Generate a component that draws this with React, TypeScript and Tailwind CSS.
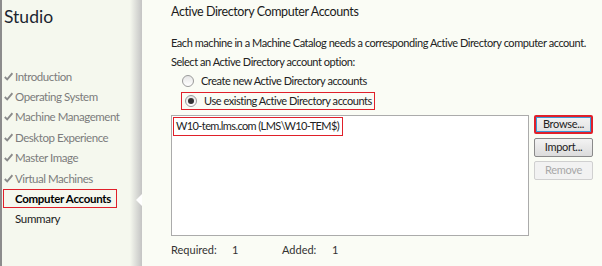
import React from "react";

const font = { fontFamily: 'Lato, "Noto Sans", sans-serif' };

const steps = [
  "Introduction",
  "Operating System",
  "Machine Management",
  "Desktop Experience",
  "Master Image",
  "Virtual Machines",
];

const Check = () => (
  <svg width="9" height="9" viewBox="0 0 9 9" className="shrink-0">
    <path d="M0.8 5 L3.2 7.4 L8.4 1.2" stroke="#8a8a8a" strokeWidth="1.8" fill="none" />
  </svg>
);

const Radio = ({ checked }: { checked?: boolean }) => (
  <span className="w-[12px] h-[12px] rounded-full border border-[#9a9a9a] bg-gradient-to-b from-[#e6e6e6] to-[#ffffff] flex items-center justify-center shrink-0">
    {checked && <span className="w-[6px] h-[6px] rounded-full bg-[#333]" />}
  </span>
);

const Sidebar = () => (
  <div className="relative w-[142px] shrink-0 flex border-l-[2px] border-[#8c8c8c] bg-[#f5f8ee] whitespace-nowrap">
    <div className="flex-1 flex flex-col">
      <div className="text-[17.5px] leading-none text-[#1b2530] pl-[2px] pt-[8px] h-[66px]">Studio</div>
      {steps.map((s) => (
        <div key={s} className="h-[20.4px] flex items-center gap-[2px] pl-[2px] text-[11.5px] tracking-[-0.45px] text-[#7c7c7c]">
          <Check />
          <span>{s}</span>
        </div>
      ))}
      <div className="h-[20.4px] flex items-center">
        <div className="ml-[1px] w-[114px] h-[19px] border-[1.5px] border-[#e0202a] flex items-center pl-[11px] text-[11.5px] tracking-[-0.3px] font-bold text-black">
          Computer Accounts
        </div>
      </div>
      <div className="h-[20.4px] flex items-center pl-[13px] text-[11.5px] tracking-[-0.3px] text-[#222]">Summary</div>
    </div>
    <div className="w-[12px] bg-gradient-to-r from-[#f5f8ee] to-[#c4c4c4]" />
    <div className="absolute right-0 top-[194px] w-0 h-0 border-y-[6px] border-y-transparent border-r-[6px] border-r-white" />
  </div>
);

const Button = ({ label, disabled, focused }: { label: string; disabled?: boolean; focused?: boolean }) => (
  <div
    className={
      "w-[59px] h-[19px] rounded-[2px] flex items-center justify-center text-[11px] tracking-[-0.3px] " +
      (focused
        ? "border-[2px] border-[#e0202a] bg-gradient-to-b from-[#f3f3f3] to-[#e2e2e2] text-[#222] shadow-[inset_0_0_0_1px_#3c9ad8]"
        : disabled
        ? "border border-[#d0d0d0] bg-[#f2f2f2] text-[#a8a8a8]"
        : "border border-[#8a8a8a] bg-gradient-to-b from-[#f3f3f3] to-[#dcdcdc] text-[#222]")
    }
  >
    {label}
  </div>
);

export default function App() {
  return (
    <div style={font} className="w-[602px] h-[266px] flex bg-[#fafcf5] overflow-hidden">
      <Sidebar />
      <div className="flex-1 pl-[29px] pt-[3px] text-[11px] tracking-[-0.45px] text-[#222] whitespace-nowrap">
        <div className="text-[12.5px] tracking-[-0.4px] text-[#1b1b1b] h-[18px] leading-[18px]">Active Directory Computer Accounts</div>
        <div className="mt-[12px] h-[19px] leading-[19px]">
          Each machine in a Machine Catalog needs a corresponding Active Directory computer account.
        </div>
        <div className="h-[19px] leading-[19px]">Select an Active Directory account option:</div>
        <div className="h-[20px] flex items-center gap-[7px] pl-[11px]">
          <Radio />
          <span>Create new Active Directory accounts</span>
        </div>
        <div className="h-[20px] flex items-center">
          <div className="ml-[10px] w-[194px] h-[18px] border-[1.5px] border-[#e0202a] flex items-center gap-[7px] pl-[3px]">
            <Radio checked />
            <span>Use existing Active Directory accounts</span>
          </div>
        </div>
        <div className="flex gap-[5px] mt-[4px]">
          <div className="w-[358px] h-[121px] border border-[#ababab] bg-white p-[1px]">
            <div className="w-[170px] h-[19px] border-[1.5px] border-[#e0202a] flex items-center pl-[2px] text-[11px] tracking-[-0.6px]">
              W10-tem.lms.com (LMS\W10-TEM$)
            </div>
          </div>
          <div className="flex flex-col gap-[4px]">
            <Button label="Browse..." focused />
            <Button label="Import..." />
            <Button label="Remove" disabled />
          </div>
        </div>
        <div className="flex mt-[5px] h-[18px] items-center text-[#333] tracking-normal">
          <span className="w-[61px]">Required:</span>
          <span className="w-[50px]">1</span>
          <span className="w-[50px]">Added:</span>
          <span>1</span>
        </div>
      </div>
    </div>
  );
}
